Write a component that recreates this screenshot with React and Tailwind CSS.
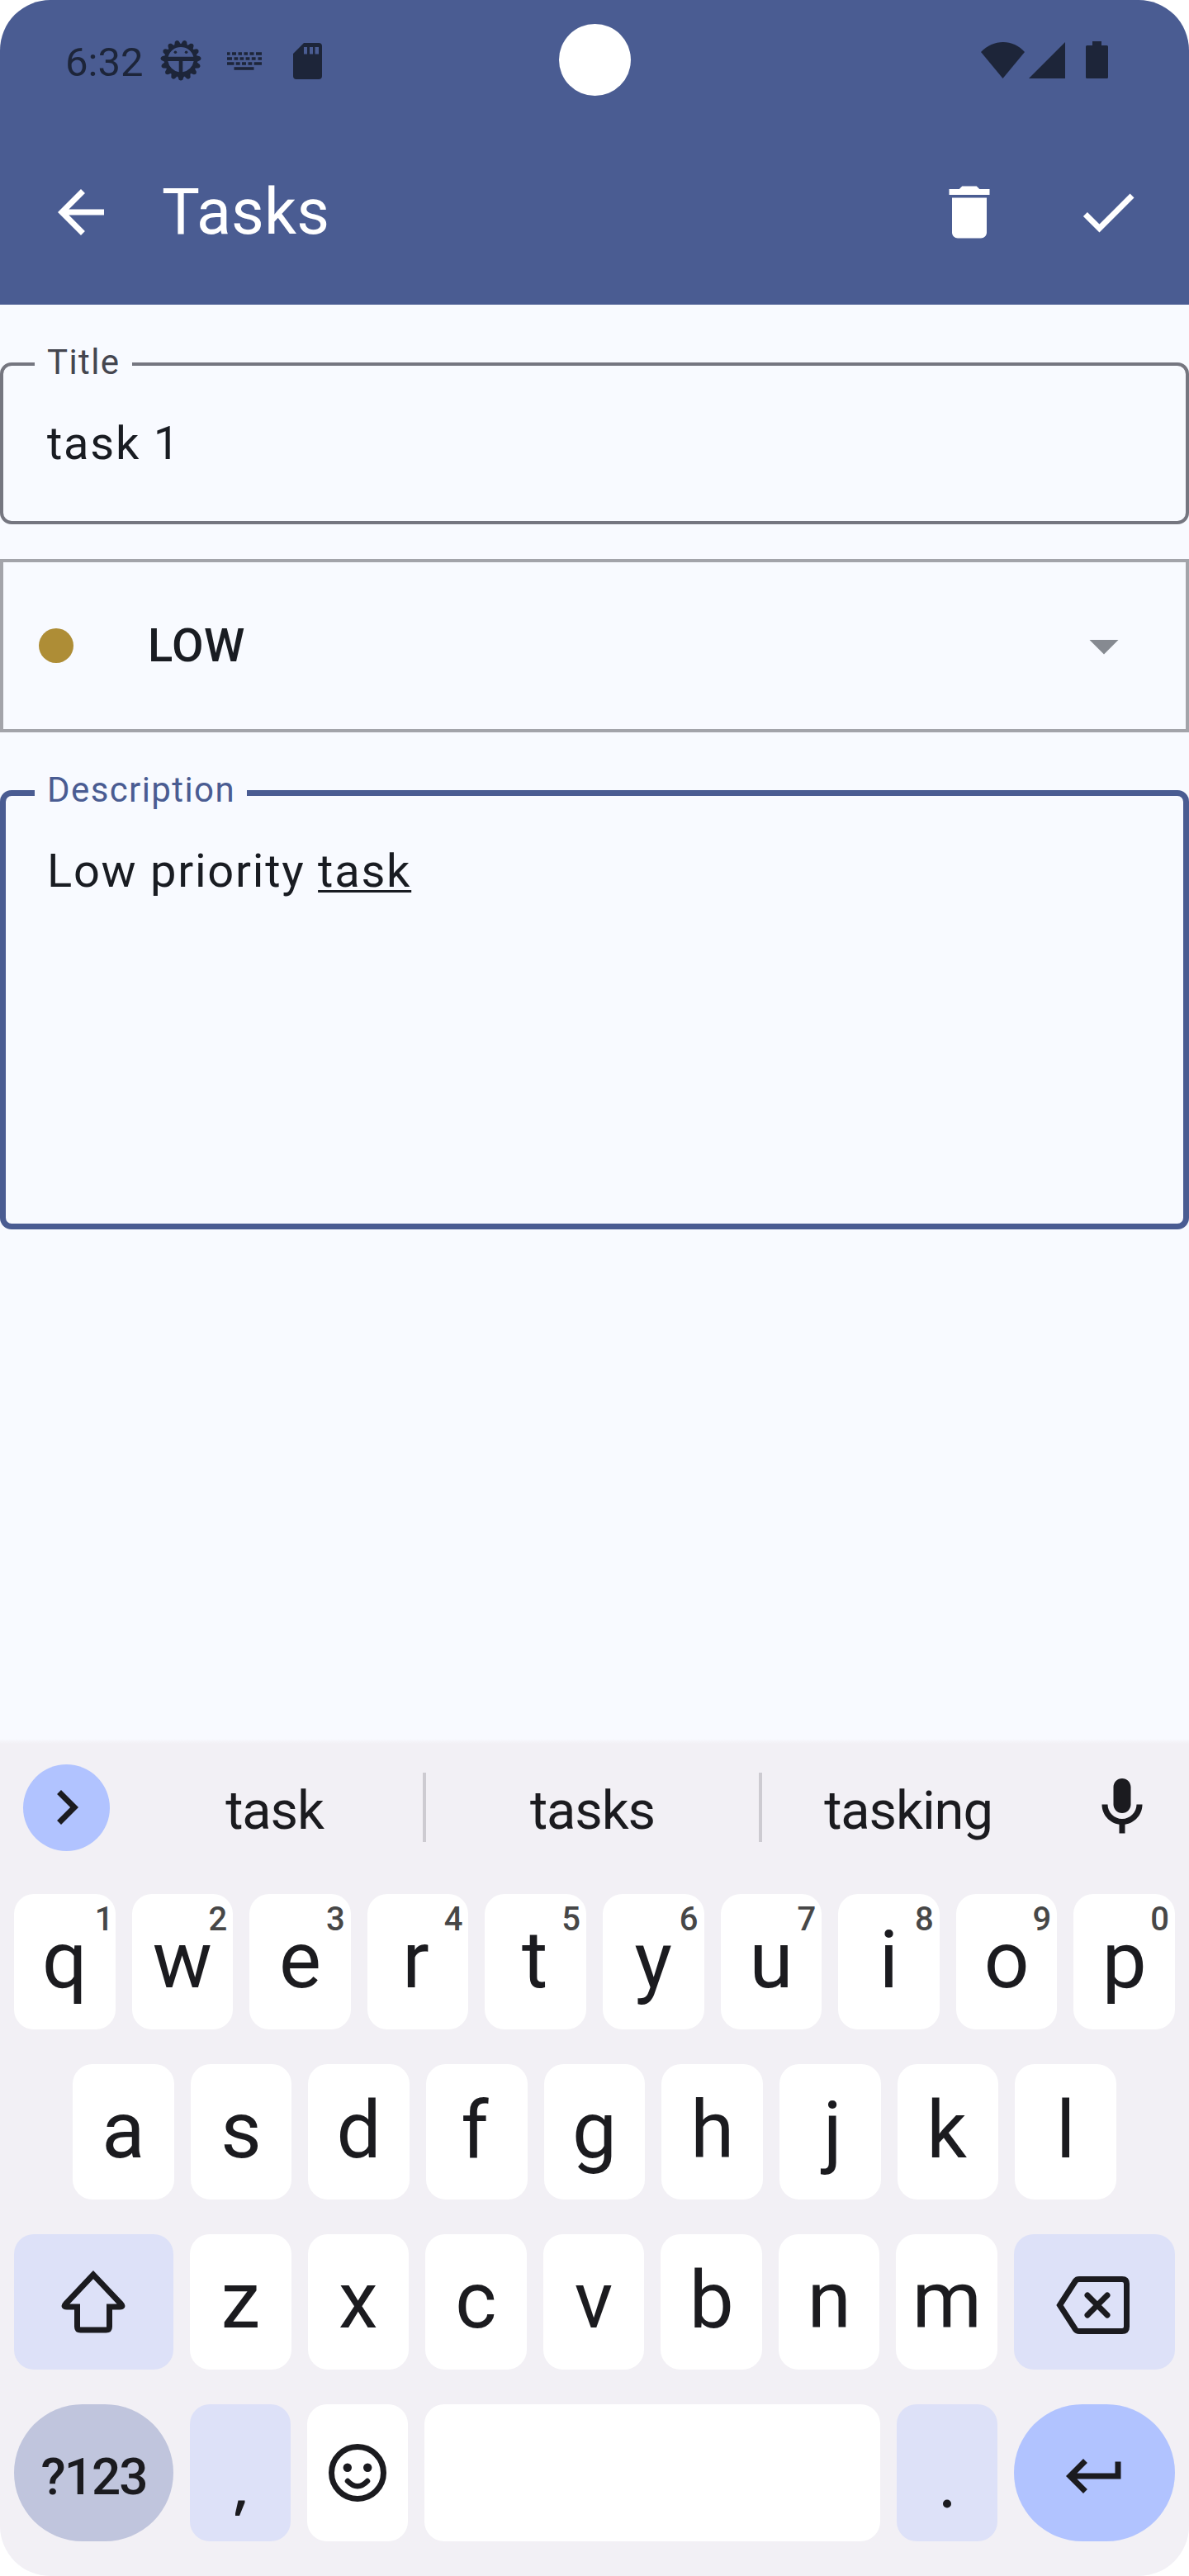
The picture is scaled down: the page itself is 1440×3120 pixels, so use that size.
const ROW1 = [["q", 1], ["w", 2], ["e", 3], ["r", 4], ["t", 5], ["y", 6], ["u", 7], ["i", 8], ["o", 9], ["p", 0]];
const ROW2 = ["a", "s", "d", "f", "g", "h", "j", "k", "l"];
const ROW3 = ["z", "x", "c", "v", "b", "n", "m"];
// Optical centring for letters with uneven side bearings
const OPTICAL = { r: "mr-[5px]", f: "mr-[5px]", j: "ml-[6px]", t: "mr-[2px]", k: "mr-[3px]" };

function Icon({ d, className }) {
  return (
    <svg viewBox="0 0 24 24" className={`block size-[84px] shrink-0 ${className || ""}`} fill="currentColor">
      <path d={d} />
    </svg>
  );
}

function Gear() {
  const teeth = Array.from({ length: 15 }, (_, i) => i * 24 + 180);
  return (
    <svg viewBox="-25 -25 50 50" className="ml-[21px] block size-[50px]" fill="currentColor">
      {teeth.map((a) => (
        <path key={a} d="M-4.4-18L-2.4-23.2Q0-26 2.4-23.2L4.4-18Z" transform={`rotate(${a})`} />
      ))}
      <path fillRule="evenodd" d="M0-20A20 20 0 1 1 0 20A20 20 0 1 1 0-20ZM-15.3-4.2H15.3A15.8 15.8 0 0 0-15.3-4.2ZM-15.6 1A15.8 15.8 0 0 0-2.3 14.2V1ZM15.6 1A15.8 15.8 0 0 1 2.3 14.2V1Z" />
      <circle cx="-6.6" cy="-9.7" r="1.8" />
      <circle cx="6.6" cy="-9.7" r="1.8" />
    </svg>
  );
}

function StatusBar() {
  return (
    <div className="flex h-[145px] items-center pl-[79px] pr-[98px] text-[#1d2539]">
      <span className="pt-[5px] text-[49px] leading-[57px]">6:32</span>
      <Gear />
      <svg viewBox="0 0 42 22" className="ml-[31px] mt-[3px] block h-[22px] w-[42px]" fill="none" stroke="currentColor" strokeWidth="3.6">
        <path d="M0 2H3.6M6 2H11M13.5 2H18M20.5 2H25M27.5 2H32.5M35 2H42" />
        <path d="M0 8H6M8.500 8H13.300M15.500 8H20.200M22.600 8H27.400M29.800 8H34.600M37.500 8H42" />
        <path d="M0 14H8.500M10.700 14H15.700M18 14H23M25.500 14H30.300M32.700 14H42" />
        <path d="M8.500 20H32.500" />
      </svg>
      <svg viewBox="0 0 35 44" className="ml-[38px] mt-[2px] block h-[44px] w-[35px]" fill="currentColor">
        <path fillRule="evenodd" d="M13 0H31Q35 0 35 4V40Q35 44 31 44H4Q0 44 0 40V13ZM13 5V13.500H17V5ZM20 5V13.500H24V5ZM26.500 5V13.500H31V5Z" />
      </svg>
      <div className="grow" />
      <svg viewBox="0 0 54 44" className="block h-[44px] w-[54px]" fill="currentColor">
        <path d="M0 12C15-4 39-4 53 12L26.500 44Z" />
      </svg>
      <svg viewBox="0 0 44 44" className="ml-[4px] block size-[44px]" fill="currentColor">
        <path d="M44 0V44H0Z" />
      </svg>
      <svg viewBox="0 0 27 45" className="ml-[25px] block h-[45px] w-[27px]" fill="currentColor">
        <path d="M8 0H19V5H25.500Q27 5 27 6.500V43.500Q27 45 25.500 45H1.500Q0 45 0 43.500V6.500Q0 5 1.500 5H8Z" />
      </svg>
    </div>
  );
}

function Key({ label, hint }) {
  return (
    <div className="relative flex h-full flex-1 justify-center rounded-[24px] bg-white pt-[24px] text-[96px] leading-[112px]">
      {hint !== undefined && (
        <span className={`absolute top-[8px] text-[40px] font-medium leading-[46px] text-[#474747] ${hint === 1 ? "right-[2px]" : "right-[7px]"}`}>{hint}</span>
      )}
      <span className={OPTICAL[label]}>{label}</span>
    </div>
  );
}

function Keyboard() {
  return (
    <div className="flex h-[1014px] shrink-0 flex-col bg-[linear-gradient(#f8faff,#f2f0f5_6px)] pt-[2px] text-[#1b1b1f]">
      <div className="flex h-[186px] shrink-0 items-center pb-[24px] pl-[28px] text-[65px] leading-[76px] tracking-[-1.1px]">
        <div className="flex size-[105px] items-center justify-center rounded-full bg-[#b1c3ff]">
          <Icon d="M10 6L8.590 7.410 13.170 12l-4.580 4.590L10 18l6-6z" />
        </div>
        <div className="w-[379px] pl-[20px] pt-[7px] text-center">task</div>
        <div className="h-[84px] w-[4px] bg-[#cdcbd1]" />
        <div className="w-[403px] pt-[7px] text-center">tasks</div>
        <div className="h-[84px] w-[4px] bg-[#cdcbd1]" />
        <div className="w-[354px] pt-[7px] text-center">tasking</div>
        <Icon className="ml-[40px]" d="M12 14c1.660 0 3-1.340 3-3V5c0-1.660-1.340-3-3-3S9 3.340 9 5v6c0 1.660 1.340 3 3 3zM17 11c0 2.760-2.240 5-5 5s-5-2.240-5-5H5c0 3.530 2.610 6.430 6 6.920V21h2v-3.080c3.390-.490 6-3.390 6-6.920h-2z" />
      </div>
      <div className="flex flex-col gap-[42px] px-[17px]">
        <div className="flex h-[164px] gap-[20px]">
          {ROW1.map(([k, h]) => <Key key={k} label={k} hint={h} />)}
        </div>
        <div className="flex h-[164px] gap-[20px] px-[71px]">
          {ROW2.map((k) => <Key key={k} label={k} />)}
        </div>
        <div className="flex h-[164px] gap-[20px]">
          <div className="w-[193px] rounded-[24px] bg-[#dde1f8]">
            <svg viewBox="0 0 193 164" className="block h-[164px] w-[193px]" fill="none" stroke="currentColor" strokeWidth="7">
              <path d="M96 49L62.500 84.500Q59 88 64 88H76.500V112Q76.500 116 80.500 116H111.500Q115.500 116 115.500 112V88H128Q133 88 129.500 84.500Z" />
            </svg>
          </div>
          {ROW3.map((k) => <Key key={k} label={k} />)}
          <div className="w-[195px] rounded-[24px] bg-[#dde1f8]">
            <svg viewBox="0 0 195 164" className="block h-[164px] w-[195px]" fill="none" stroke="currentColor" strokeWidth="7">
              <path d="M55.500 86L74.500 56.500Q76 54.500 79 54.500H131Q136.500 54.500 136.500 60V112Q136.500 117.500 131 117.500H79Q76 117.500 74.500 115.500Z" />
              <path d="M89 74L113 98M113 74L89 98" strokeLinecap="round" />
            </svg>
          </div>
        </div>
        <div className="flex h-[166px] gap-[20px]">
          <div className="flex w-[193px] items-center justify-center rounded-[83px] bg-[#c0c5dd] pt-[9px] text-[62px] font-medium leading-[74px] tracking-[-2px]">?123</div>
          <div className="w-[122px] rounded-[24px] bg-[#dde1f8]">
            <svg viewBox="0 0 122 166" className="block h-[166px] w-[122px]" fill="currentColor">
              <path d="M58.500 116.500H66.500V119L60 135H55V132Z" />
            </svg>
          </div>
          <div className="w-[122px] rounded-[24px] bg-white">
            <svg viewBox="0 0 122 166" className="block h-[166px] w-[122px]" fill="none" stroke="currentColor" strokeWidth="7">
              <circle cx="61" cy="83" r="31.500" />
              <circle cx="48.800" cy="76.700" r="5.200" fill="currentColor" stroke="none" />
              <circle cx="73.200" cy="76.700" r="5.200" fill="currentColor" stroke="none" />
              <path d="M49 93Q61 105.500 73 93" strokeWidth="6.500" strokeLinecap="round" />
            </svg>
          </div>
          <div className="grow rounded-[24px] bg-white" />
          <div className="w-[122px] rounded-[24px] bg-[#dde1f8]">
            <svg viewBox="0 0 122 166" className="block h-[166px] w-[122px]" fill="currentColor">
              <circle cx="61" cy="120.500" r="5" />
            </svg>
          </div>
          <div className="flex w-[195px] items-center justify-center rounded-[83px] bg-[#b1c3ff] pt-[7px]">
            <Icon d="M19 7v4H5.830l3.580-3.590L8 6l-6 6 6 6 1.410-1.410L5.830 13H21V7z" />
          </div>
        </div>
      </div>
    </div>
  );
}

export default function App() {
  return (
    <div className="h-[3120px] w-[1440px] bg-white font-['Roboto',sans-serif]">
      <div className="flex h-full flex-col overflow-hidden rounded-[61px] bg-[#f8faff]">
        <header className="relative h-[369px] shrink-0 bg-[#4a5c92]">
          <StatusBar />
          <div className="absolute left-[677px] top-[29px] size-[87px] rounded-full bg-white" />
          <div className="flex h-[224px] items-center pl-[56px] pr-[56px] text-white">
            <Icon d="M20 11H7.830l5.590-5.590L12 4l-8 8 8 8 1.410-1.410L7.830 13H20v-2z" />
            <h1 className="ml-[56px] grow text-[77px] leading-[90px] tracking-[0.2px]">Tasks</h1>
            <Icon d="M6 19c0 1.100.9 2 2 2h8c1.100 0 2-.9 2-2V7H6v12zM19 4h-3.500l-1-1h-5l-1 1H5v2h14V4z" />
            <Icon className="ml-[84px]" d="M9 16.170L4.830 12l-1.420 1.410L9 19 21 7l-1.410-1.410z" />
          </div>
        </header>

        <main className="flex grow flex-col pt-[70px] text-[56px] leading-[84px] text-[#191c22]">
          <section className="relative h-[196px] rounded-[14px] border-4 border-[#757680] px-[53px] pt-[52px] tracking-[1.75px]">
            <span className="absolute -top-[28px] left-[38px] bg-[#f8faff] pl-[15px] pr-[14px] text-[42px] leading-[48px] tracking-[1.4px] text-[#45464f]">Title</span>
            task 1
          </section>
          <section className="mt-[42px] flex h-[210px] items-center border-4 border-[#a3a4aa] pl-[43px] pr-[57px]">
            <div className="size-[42px] rounded-full bg-[#ae8d36]" />
            <span className="ml-[90px] grow font-medium tracking-[0.5px]">LOW</span>
            <Icon className="text-[#868a91]" d="M7 10l5 5 5-5z" />
          </section>
          <section className="relative mt-[70px] h-[532px] rounded-[14px] border-[7px] border-[#4a5c92] px-[50px] pt-[49px] tracking-[1.75px]">
            <span className="absolute -top-[31px] left-[35px] bg-[#f8faff] pl-[15px] pr-[14px] text-[42px] leading-[48px] tracking-[1.4px] text-[#4a5c92]">Description</span>
            Low priority <span className="underline decoration-[3px] underline-offset-[4px]">task</span>
          </section>
        </main>
        <Keyboard />
      </div>
    </div>
  );
}
